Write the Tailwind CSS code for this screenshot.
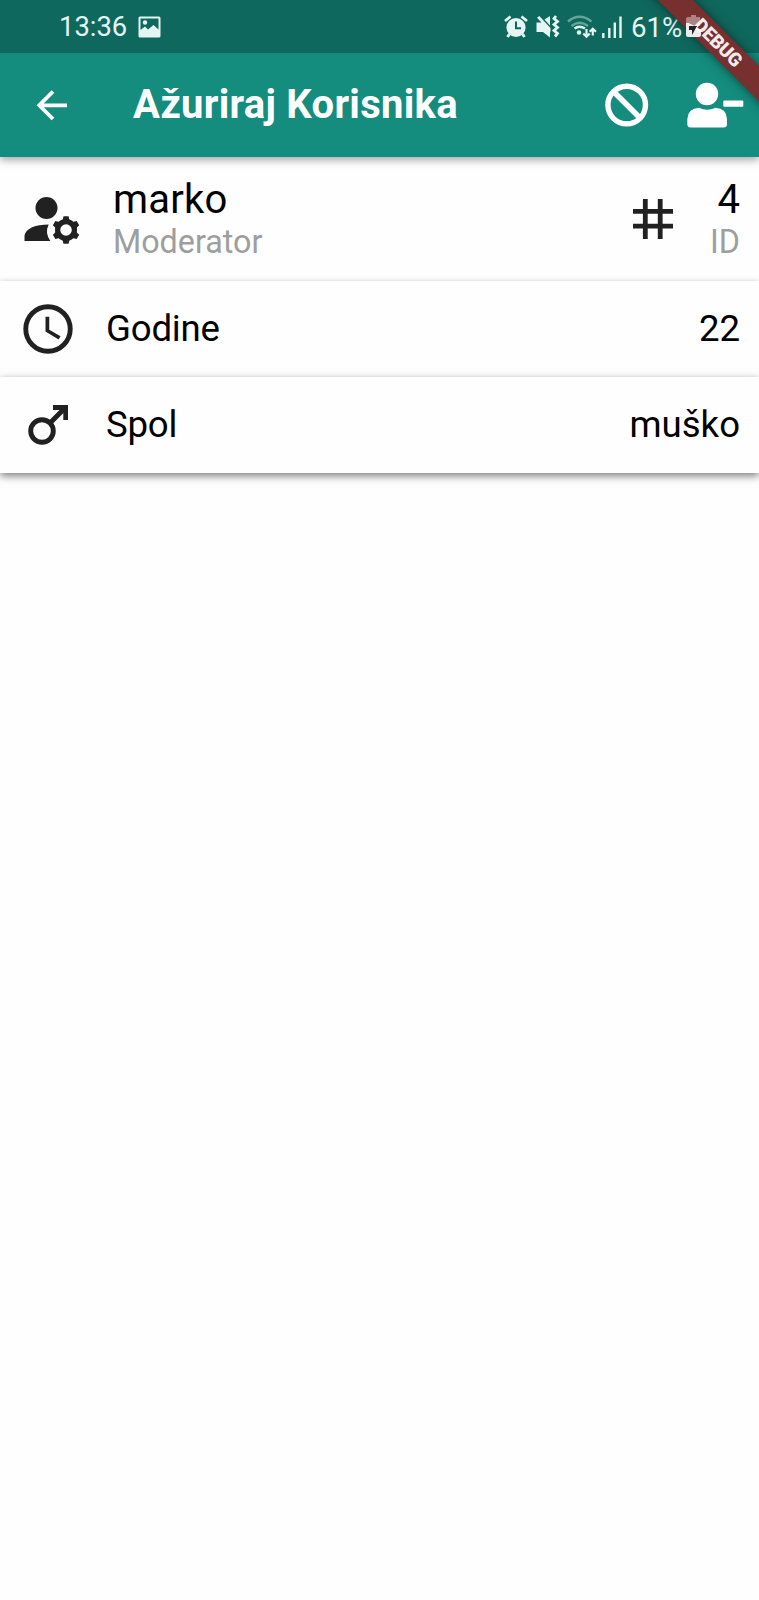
<!DOCTYPE html>
<html lang="hr">
<head>
<meta charset="utf-8">
<title>Ažuriraj Korisnika</title>
<script src="https://cdn.jsdelivr.net/npm/@tailwindcss/browser@4"></script>
</head>
<body class="bg-[#fefefe]">
<main class="relative flex h-[1600px] w-[759px] flex-col overflow-hidden bg-[#fefefe] font-[Roboto,sans-serif] text-black">
  <header class="relative z-10 shrink-0 bg-[#148c7e] text-white shadow-[0_3px_8px_rgba(0,0,0,0.35)]">
    <div class="flex h-[53px] items-center bg-[#0f685d] pl-[59px] text-[#e4f5f2]">
      <span class="w-[79px] pt-[2px] text-[27.400px] leading-none">13:36</span>
      <svg class="block" width="23" height="22" viewBox="0 0 23 22"><path fill="currentColor" fill-rule="evenodd" d="M2 0.5H21Q22.500 0.500 22.500 2V20Q22.500 21.500 21 21.500H2Q.5 21.500 .5 20V2Q.5 .5 2 .5ZM2.500 2.500V14L7 10.500L10 13.500L15.500 9L20.500 13.500V2.500Z"/><circle cx="7" cy="6.500" r="2.200" fill="currentColor"/></svg>
      <svg class="ml-[341px] block" width="122" height="26" viewBox="502 13 122 26" fill="none" stroke="currentColor">
        <circle cx="516" cy="26.500" r="9.600" fill="currentColor" stroke="none"/>
        <path stroke-width="2.800" d="M505 20L510.500 15.500M521.500 15.500L527 20M509.500 33L507.500 36M522.500 33L524.500 36"/>
        <path stroke="#0f685d" stroke-width="2" d="M516 20.500V27.300H521"/>
        <path fill="currentColor" stroke="none" d="M536.500 21.500H542L550 30V36.500L543 31H536.500ZM544.500 18.500L550 15V24.500ZM537 16.800L539.300 15L550.500 27V31Z"/>
        <path stroke-width="2.800" d="M556 15L554 17.500L557.500 20.500L554 23.500L557.500 26.500L554 29.500L557.500 32.500L555 35.500"/>
        <path stroke="#65a49b" stroke-width="2.400" d="M568 20.500Q579.500 11 591.500 20.500M571.500 25Q579.500 18.500 588 25"/>
        <path stroke-width="2.400" d="M574.500 27.500Q579.500 24 585 27.500"/>
        <circle cx="579" cy="31.500" r="2.200" fill="currentColor" stroke="none"/>
        <path stroke-width="2.200" d="M586.500 28V35.500M583.300 32.500L586.500 35.700L589.700 32.500M592.800 34.500V28M589.700 30.700L592.800 27.700L596 30.700"/>
        <path stroke-width="2.400" d="M603.300 32V37M609.300 27V37M614.800 21.500V37M620.500 15.500V37"/>
      </svg>
      <span class="ml-[7px] w-[54px] pt-[2px] text-[27.600px] leading-none">61%</span>
    </div>
    <div class="flex h-[104px] items-center">
      <svg class="ml-[36px] block" width="32" height="32" viewBox="36 89 32 32" fill="none" stroke="#fff" stroke-width="3.800"><path d="M67 105.300H39M53 91.500L39.200 105.300L53 119"/></svg>
      <h1 class="ml-[65px] w-[340px] text-[40px] leading-none font-bold tracking-[0.280px] whitespace-nowrap">Ažuriraj Korisnika</h1>
      <svg class="ml-[132px] block" width="44" height="44" viewBox="0 0 44 44" fill="none" stroke="#fff" stroke-width="5.400"><circle cx="21.700" cy="22" r="18.800"/><path d="M8.500 8.500L35.500 35.500"/></svg>
      <svg class="ml-[38px] block" width="57" height="46" viewBox="687 82 57 46" fill="#fff"><circle cx="707" cy="94" r="11.200"/><path d="M687.300 124V119Q688 108.500 699 107.800Q707 111.500 715.500 107.800Q726.500 108.500 727 119V124Q727 127.500 723.500 127.500H690.800Q687.300 127.500 687.300 124Z"/><rect x="723.300" y="100.500" width="20" height="6.200" rx="1"/></svg>
    </div>
  </header>

  <section class="relative flex h-[124px] shrink-0 items-center bg-[#fefefe] pr-[19px] shadow-[0_2px_6px_rgba(0,0,0,0.4)]">
    <svg class="ml-[18.500px] block" width="66" height="66" viewBox="0 0 24 24" fill="#212121"><circle cx="10" cy="8" r="4"/><path d="M2 20V18C2.500 15.400 6 14 10.800 14Q9.300 17 11.400 20Z"/><g transform="translate(17.100 16)"><circle r="3.050" fill="none" stroke="#212121" stroke-width="1.900"/><path d="M-.9-5H.9L1.300-3.500H-1.300ZM-.9 5H.9L1.300 3.500H-1.300Z"/><path transform="rotate(60)" d="M-.9-5H.9L1.300-3.500H-1.300ZM-.9 5H.9L1.300 3.500H-1.300Z"/><path transform="rotate(120)" d="M-.9-5H.9L1.300-3.500H-1.300ZM-.9 5H.9L1.300 3.500H-1.300Z"/></g></svg>
    <div class="ml-[28.500px] flex grow flex-col pt-px">
      <span class="text-[40px] leading-[46px] tracking-[0.200px]">marko</span>
      <span class="text-[32.300px] leading-[39px] text-[#9e9e9e]">Moderator</span>
    </div>
    <svg class="mr-[37px] block" width="40" height="40" viewBox="0 0 40 40" stroke="#212121" stroke-width="4.800"><path d="M12.300 0V40M27.200 0V40M0 12.300H40M0 27.200H40"/></svg>
    <div class="flex flex-col items-end pt-px">
      <span class="text-[40px] leading-[46px]">4</span>
      <span class="text-[32.300px] leading-[39px] text-[#9e9e9e]">ID</span>
    </div>
  </section>
  <section class="relative flex h-[96px] shrink-0 items-center bg-[#fefefe] pr-[19px] text-[36.600px] shadow-[0_2px_6px_rgba(0,0,0,0.4)]">
    <svg class="ml-[18px] block" width="60" height="60" viewBox="0 0 24 24"><circle cx="12" cy="12" r="8.900" fill="none" stroke="#212121" stroke-width="1.950"/><path fill="#212121" d="M11 7.100H12.500V12.250L17 14.920L16.250 16.150L11 13Z"/></svg>
    <span class="ml-[28px] grow tracking-[-0.200px]">Godine</span>
    <span>22</span>
  </section>
  <section class="relative flex h-[96px] shrink-0 items-center bg-[#fefefe] pr-[19px] text-[36.600px] shadow-[0_3px_8px_rgba(0,0,0,0.5)]">
    <svg class="ml-[18px] block" width="60" height="60" viewBox="18 395 60 60" fill="none" stroke="#212121"><circle cx="42" cy="431" r="11.300" stroke-width="4.900"/><path stroke-width="5" d="M50 423L65 408"/><path fill="#212121" stroke="none" d="M53 405H68V420H63.300V410H53Z"/></svg>
    <span class="ml-[28px] grow tracking-[-0.200px]">Spol</span>
    <span>muško</span>
  </section>

  <div class="absolute top-[31px] left-[617px] z-20 flex h-[24.500px] w-[204px] rotate-45 items-center justify-center bg-[#772f2f] text-[19px] leading-none font-black text-[#f0eaea] shadow-[0_0_11px_rgba(0,0,0,0.5)]"><span class="-translate-x-px tracking-[-0.300px]">DEBUG</span></div>
  <svg class="absolute top-[14px] left-[686px] z-30 block" width="17" height="24" viewBox="0 0 17 24"><path fill="#fff" fill-opacity=".9" d="M0 9H3L9 12L15 17V21Q15 23 13 23H2Q0 23 0 21Z"/><path fill="#fff" fill-opacity=".4" d="M5 1H10V3H14V12H9L3 9H0V5Q0 3 2 3H5Z"/><path fill="#222" d="M3 12H11L6 21V16H3Z"/></svg>
</main>
</body>
</html>
